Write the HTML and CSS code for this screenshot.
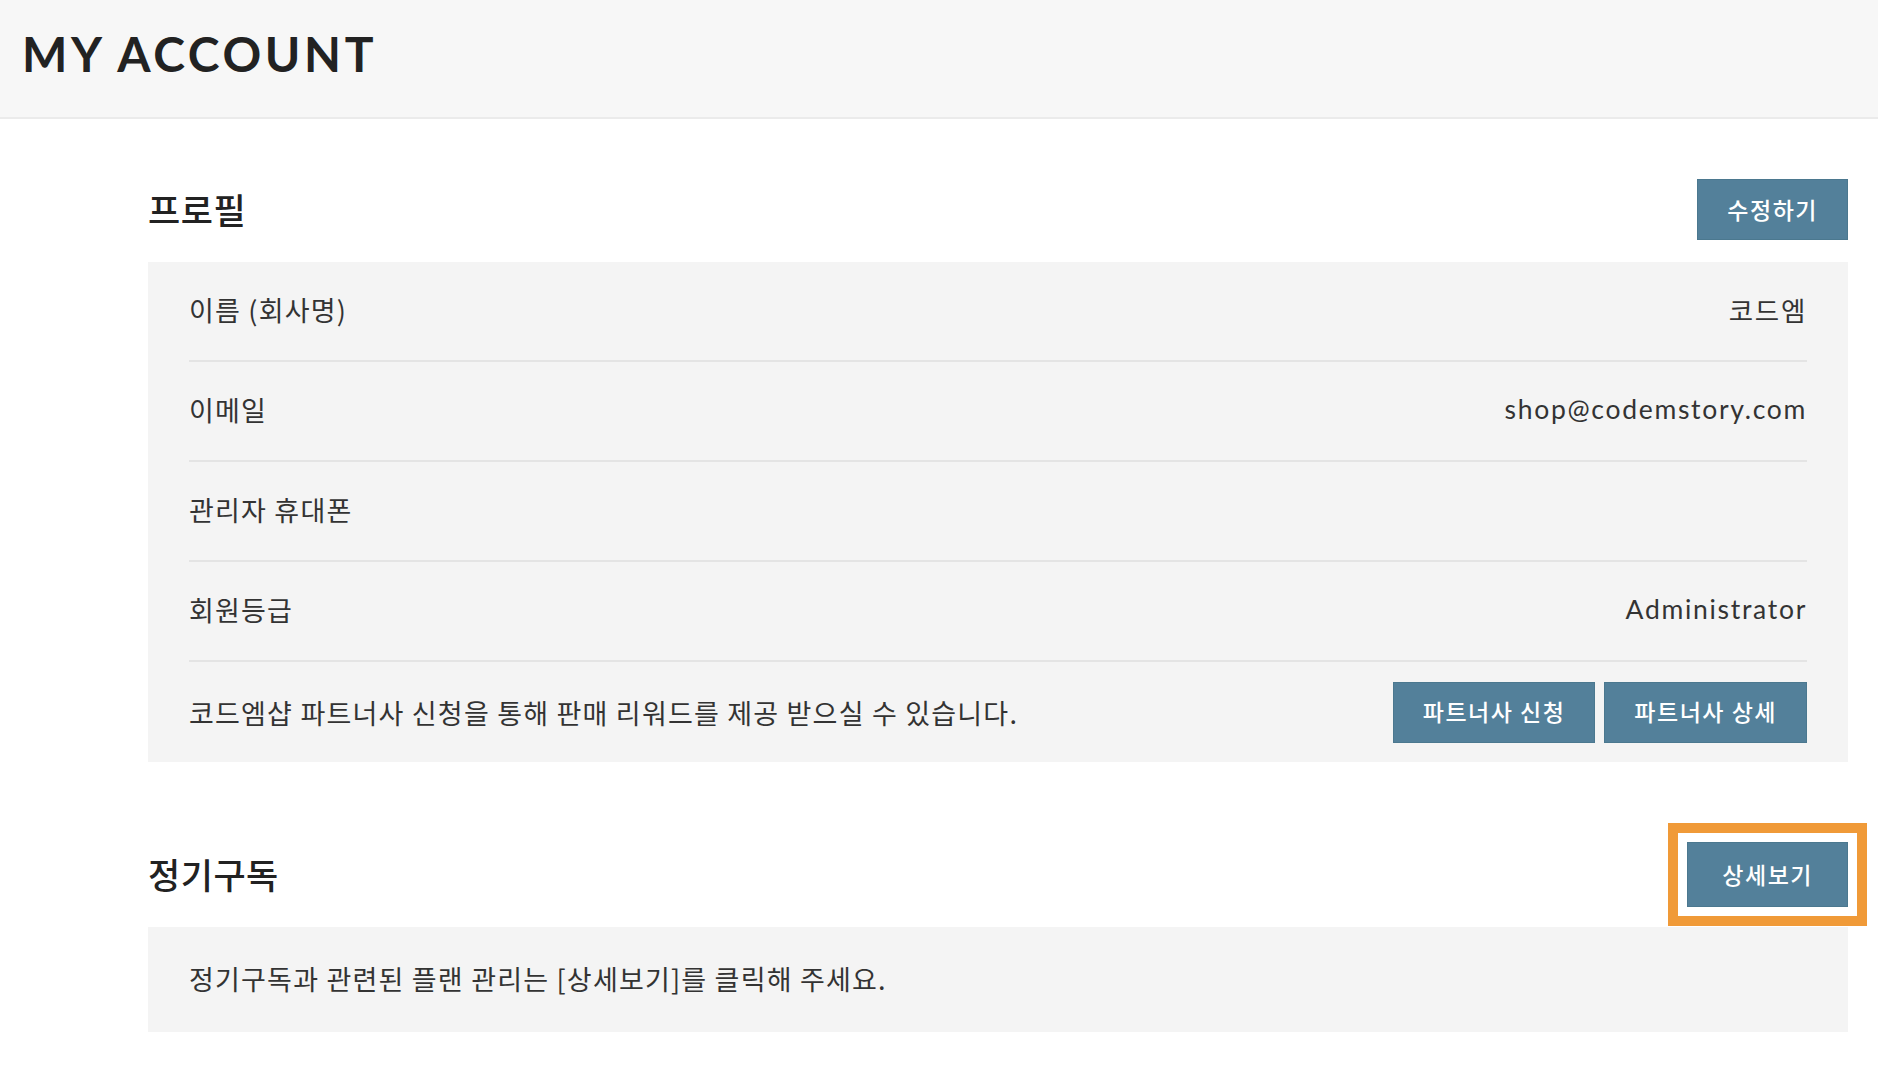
FILE: index.html
```html
<!DOCTYPE HTML>
<html>
  <head>
    <meta http-equiv="content-type" content="text/html; charset=utf-8">
    <meta name="viewport" content="width=device-width, initial-scale=1.0">
    <title>My Account</title>
    <link rel="stylesheet" href="styles.css">
  </head>
  <body>
    <div class="page-header">
      <h1 class="page-title">MY ACCOUNT</h1>
    </div>
    <div class="content">
      <div class="section">
        <div class="section-head">
          <h2 class="section-title">프로필</h2>
          <a href="#" class="btn">수정하기</a>
        </div>
        <ul class="info-box">
          <li class="info-row"><span class="label">이름 (회사명)</span><span class="value">코드엠</span></li
          ><li class="info-row"><span class="label">이메일</span><span class="value">shop@codemstory.com</span></li
          ><li class="info-row"><span class="label">관리자 휴대폰</span><span class="value"></span></li
          ><li class="info-row"><span class="label">회원등급</span><span class="value">Administrator</span></li
          ><li class="info-row">
            <span class="label">코드엠샵 파트너사 신청을 통해 판매 리워드를 제공 받으실 수 있습니다.</span>
            <span class="btn-group">
              <a href="#" class="btn">파트너사 신청</a>
              <a href="#" class="btn">파트너사 상세</a>
            </span>
          </li>
        </ul>
      </div>
      <div class="section section-sub">
        <div class="section-head">
          <h2 class="section-title">정기구독</h2>
          <a href="#" class="btn btn-large btn-focus">상세보기</a>
        </div>
        <div class="note-box">정기구독과 관련된 플랜 관리는 [상세보기]를 클릭해 주세요.</div>
      </div>
    </div>
  </body>
</html>
```

FILE: styles.css
```css
body{margin:0; padding:0; background:#fff; color:#333; font-family:"Noto Sans CJK KR", "Noto Sans", sans-serif;}

.page-header{height:119px; background:#f7f7f7; border-bottom:2px solid #ebebeb; display:flex; align-items:center; padding:0 0 10px 22px; box-sizing:border-box;}
.page-title{margin:0; font-family:Lato, "Noto Sans", sans-serif; font-weight:700; font-size:48px; letter-spacing:3.6px; color:#222; line-height:1;}

.content{padding:60px 30px 40px 148px;}

.section-head{display:flex; justify-content:space-between; align-items:center; margin-bottom:22px;}
.section-title{margin:0 0 3px; font-size:35px; font-weight:500; letter-spacing:0.5px; color:#222; line-height:1;}

.section-sub{margin-top:80px;}
.section-sub .section-head{margin-bottom:20px;}

.btn{display:inline-flex; align-items:center; justify-content:center; height:61px; padding:0 29px 2px; box-sizing:border-box; background:#53809a; border:1px solid #4b788f; color:#fff; font-size:23px; font-weight:500; letter-spacing:1.5px; text-decoration:none;}
.btn:active{background:#45708a;}
.btn-large{height:65px; padding:0 34px 2px;}
.btn-focus{outline:10px solid #f09a38; outline-offset:9px;}

.info-box{margin:0; padding:0 41px; list-style-type:none; background:#f4f4f4;}
.info-row{display:flex; justify-content:space-between; align-items:center; height:100px; padding-bottom:4px; box-sizing:border-box; border-bottom:2px solid #e4e4e4; font-size:27px; letter-spacing:1.2px;}
.info-row:last-child{border-bottom:none; padding-bottom:0;}
.label{color:#333;}
.value{color:#333; font-family:Lato, "Noto Sans CJK KR", sans-serif; letter-spacing:1.7px; font-size:26.5px;}
.btn-group{display:flex; gap:9px;}

.note-box{height:105px; display:flex; align-items:center; padding:0 41px 3px; box-sizing:border-box; background:#f4f4f4; font-size:27px; letter-spacing:1.2px; color:#333;}
```
